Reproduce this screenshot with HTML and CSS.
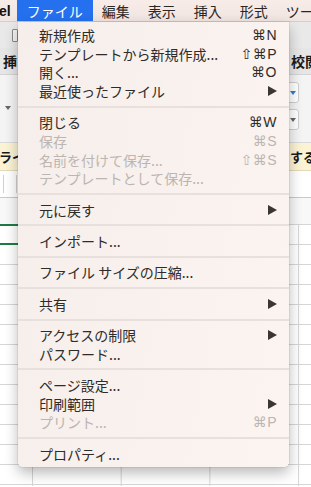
FILE: index.html
```html
<!DOCTYPE html>
<html lang="ja">

<head>
    <meta charset="UTF-8">
    <meta name="viewport" content="width=device-width, initial-scale=1.0">
    <title>ファイル メニュー</title>
    <link rel="stylesheet" href="styles.css">
</head>

<body>
    <div id="screen">
        <div class="menubar">
            <div class="mb-app">el</div>
            <div class="mb-item active">ファイル</div>
            <div class="mb-item">編集</div>
            <div class="mb-item">表示</div>
            <div class="mb-item">挿入</div>
            <div class="mb-item">形式</div>
            <div class="mb-item">ツー</div>
        </div>

        <!-- excel window behind the menu -->
        <div class="toolbar">
            <div class="qa-icon"></div>
        </div>
        <div class="tabs">
            <span class="tab">挿</span>
            <span class="tab tab-right">校閲</span>
        </div>
        <div class="ribbon">
            <div class="rb-left">
                <span class="caret"></span>
            </div>
            <div class="rb-right">
                <div class="dd"><span class="caret blue"></span></div>
                <div class="dd"><span class="caret"></span></div>
            </div>
        </div>
        <div class="msgbar">
            <span>ライ</span>
            <span>するか</span>
        </div>
        <div class="formula">
            <div class="namebox"></div>
        </div>
        <div class="colhead"></div>
        <div class="sheet">
            <div class="selrow"></div>
        </div>

        <!-- file menu -->
        <div class="menu">
            <div class="item"><span>新規作成</span><span class="key">⌘N</span></div>
            <div class="item"><span>テンプレートから新規作成...</span><span class="key">⇧⌘P</span></div>
            <div class="item"><span>開く...</span><span class="key">⌘O</span></div>
            <div class="item"><span>最近使ったファイル</span><span class="arrow"></span></div>
            <div class="sep"></div>
            <div class="item"><span>閉じる</span><span class="key">⌘W</span></div>
            <div class="item off"><span>保存</span><span class="key">⌘S</span></div>
            <div class="item off"><span>名前を付けて保存...</span><span class="key">⇧⌘S</span></div>
            <div class="item off"><span>テンプレートとして保存...</span></div>
            <div class="sep"></div>
            <div class="item"><span>元に戻す</span><span class="arrow"></span></div>
            <div class="sep"></div>
            <div class="item"><span>インポート...</span></div>
            <div class="sep"></div>
            <div class="item"><span>ファイル サイズの圧縮...</span></div>
            <div class="sep"></div>
            <div class="item"><span>共有</span><span class="arrow"></span></div>
            <div class="sep"></div>
            <div class="item"><span>アクセスの制限</span><span class="arrow"></span></div>
            <div class="item"><span>パスワード...</span></div>
            <div class="sep"></div>
            <div class="item"><span>ページ設定...</span></div>
            <div class="item"><span>印刷範囲</span><span class="arrow"></span></div>
            <div class="item off"><span>プリント...</span><span class="key">⌘P</span></div>
            <div class="sep"></div>
            <div class="item"><span>プロパティ...</span></div>
        </div>
    </div>
</body>

</html>
```

FILE: styles.css
```css
/* reset start */
* {
    padding: 0;
    margin: 0;
    box-sizing: border-box;
}

html,
body {
    width: 100%;
    height: 100%;
}

body {
    overflow: hidden;
    background: #fff;
    font-family: "Noto Sans CJK JP", "Noto Sans", sans-serif;
    color: #2e2a28;
}

/* reset end */
#screen {
    width: 311px;
    height: 487px;
    position: relative;
    overflow: hidden;
}

/* menu bar */
.menubar {
    height: 22px;
    display: flex;
    background: linear-gradient(#f7ece8, #f1e5e1);
    border-bottom: 1px solid #d9cdc9;
    font-size: 14px;
    line-height: 22px;
    white-space: nowrap;
}

.mb-app {
    font-family: "Liberation Sans", sans-serif;
    font-weight: bold;
    color: #111;
    padding-right: 6px;
    margin-left: -1px;
}

.mb-item {
    padding: 0 9px;
    color: #2b2725;
}

.mb-item.active {
    background: #2570ee;
    color: #fff;
    padding: 0 10px;
}

/* excel window */
.toolbar {
    height: 26px;
    background: #e9e9e9;
    padding: 7px 0 0 12px;
}

.qa-icon {
    width: 6px;
    height: 13px;
    border: 1px solid #8a8a8a;
    border-radius: 1px;
    background: #f4f4f4;
}

.tabs {
    height: 27px;
    background: #e6e6e6;
    display: flex;
    justify-content: space-between;
    align-items: center;
    font-size: 14px;
    font-weight: bold;
    color: #1a1a1a;
    border-bottom: 1px solid #d4d4d4;
}

.tab {
    margin-left: 3px;
}

.tab-right {
    margin-right: -8px;
}

.ribbon {
    height: 68px;
    background: #f4f4f4;
    display: flex;
    justify-content: space-between;
    border-bottom: 1px solid #dadada;
}

.rb-left {
    padding: 31px 0 0 5px;
}

.rb-right {
    width: 24px;
    padding-top: 7px;
    display: flex;
    flex-direction: column;
    gap: 6px;
    border-left: 1px solid #e2e2e2;
}

.dd {
    width: 13px;
    height: 21px;
    margin-left: -2px;
    background: #fff;
    border: 1px solid #cfcfcf;
    border-radius: 3px;
    display: flex;
    align-items: center;
    justify-content: center;
}

.caret {
    display: block;
    width: 0;
    height: 0;
    border-left: 3px solid transparent;
    border-right: 3px solid transparent;
    border-top: 4px solid #666;
}

.caret.blue {
    border-top-color: #2f7be0;
}

.msgbar {
    height: 28px;
    background: #fcf3d4;
    border-bottom: 1px solid #e2d9b8;
    display: flex;
    justify-content: space-between;
    align-items: center;
    font-size: 13px;
    font-weight: bold;
    color: #1a1a1a;
}

.msgbar span:first-child {
    margin-left: -1px;
}

.msgbar span:last-child {
    margin-right: -18px;
}

.formula {
    height: 27px;
    background: #fff;
    border-bottom: 1px solid #c9c9c9;
    padding: 4px 0 4px 3px;
}

.namebox {
    width: 14px;
    height: 18px;
    border-left: 1px solid #d0d0d0;
    border-right: 1px solid #d0d0d0;
}

.colhead {
    height: 27px;
    background: #f8f8f8;
}

.sheet {
    height: 262px;
    background-color: #fff;
    background-image:
        linear-gradient(#d6d6d6 1px, transparent 1px),
        linear-gradient(90deg, #d6d6d6 1px, transparent 1px);
    background-size: 100% 20px, 88.7px 100%;
    background-position: 0 0, 32px 0;
}

.selrow {
    width: 40px;
    height: 21px;
    border-top: 2px solid #1f7a45;
    border-bottom: 2px solid #1f7a45;
    margin-top: -1px;
}

/* file menu */
.menu {
    position: absolute;
    left: 18px;
    top: 22px;
    width: 271px;
    padding: 4px 0;
    background: linear-gradient(100deg, #f5eeea, #fbf4f0);
    border-radius: 0 0 5px 5px;
    box-shadow: 0 6px 14px rgba(0, 0, 0, .28), 0 0 0 1px rgba(0, 0, 0, .06);
}

.item {
    height: 18.6px;
    display: flex;
    justify-content: space-between;
    align-items: center;
    padding: 0 12px 0 21px;
    font-size: 14px;
    line-height: 1;
    color: #2f2b29;
    white-space: nowrap;
}

.item.off {
    color: #bcb5b2;
}

.key {
    font-family: "Liberation Sans", "DejaVu Sans", sans-serif;
    font-size: 14px;
    letter-spacing: .5px;
}

.arrow {
    width: 0;
    height: 0;
    border-left: 9px solid #3a3634;
    border-top: 5px solid transparent;
    border-bottom: 5px solid transparent;
}

.sep {
    height: 12.8px;
    display: flex;
    align-items: center;
}

.sep::before {
    content: "";
    flex: 1;
    height: 2px;
    background: #e8e0dc;
}
```
